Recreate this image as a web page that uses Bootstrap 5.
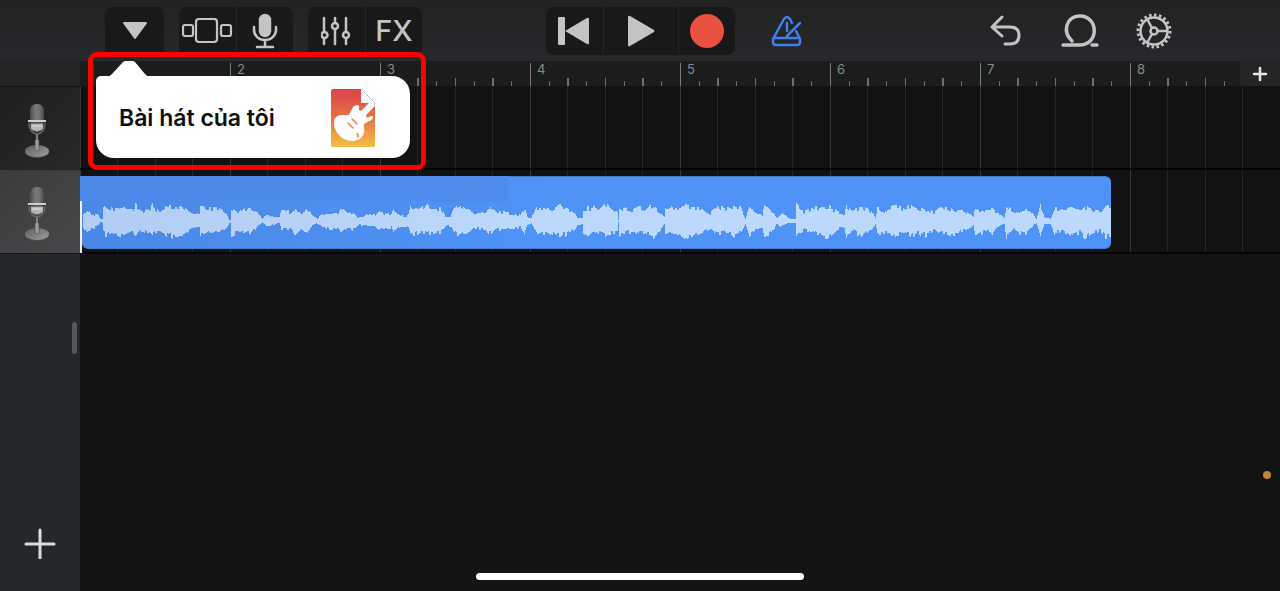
<!DOCTYPE html>
<html lang="vi">
<head>
<meta charset="utf-8">
<meta name="viewport" content="width=device-width, initial-scale=1">
<title>GarageBand</title>
<link href="https://cdn.jsdelivr.net/npm/bootstrap@5.3.0/dist/css/bootstrap.min.css" rel="stylesheet">
<style>
  :root { --bar: 150px; --side: 80px; --ink: #c4c4c6; }
  body { background: #121413; color: var(--ink); font-family: Inter, "Liberation Sans", sans-serif; }
  button { color: inherit; }
  .toolbar { display: grid; grid-template-columns: 1fr auto 1fr; height: 61px; padding-top: 7px; background: linear-gradient(#222223, #27282b); }
  .tool-set { height: 48px; border-radius: 7px; background: #19191a; overflow: hidden; }
  .tool { width: 57px; height: 48px; padding: 0; border: 0; background: none; display: flex; align-items: center; justify-content: center; }
  .tool + .tool { border-left: 1px solid #252627; }
  .tool.wide { width: 75px; }
  .tool.menu { width: 59px; }
  .bare { width: 48px; height: 48px; padding: 0; border: 0; background: none; display: flex; align-items: center; justify-content: center; }
  .left-tools { padding-left: 105px; gap: 15px; }
  .right-tools { padding-left: 28px; padding-right: 102px; }
  .right-set { gap: 26px; }
  .fx { font-size: 29px; font-weight: 500; line-height: 48px; }
  .side { width: var(--side); background: #25282a; }
  .side-head { height: 25px; background: #232425; }
  .track-btn { height: 84px; padding: 4px 6px 0 0; border: 0; border-top: 1px solid #131415; background: linear-gradient(135deg, #1e1f1f, #27292a); }
  .track-btn.active { border-top-color: #3a3b3c; background: linear-gradient(135deg, #3a3b3c, #48484a); border-bottom: 1px solid #151616; }
  .grip { width: 5px; height: 32px; border-radius: 3px; background: #56575a; margin: 68px 3px 0 auto; }
  .ruler { height: 25px; background: #1b1d1d; overflow: hidden; }
  .bar-cell { flex: 0 0 var(--bar); height: 25px; padding-left: 7px; font-size: 13px; line-height: 17px; color: #8b8c8c;
    background:
      linear-gradient(#7c7d7d, #7c7d7d) 0 2px / 1px 23px no-repeat,
      linear-gradient(90deg, transparent 37px, #6d6e6e 37px 39px, transparent 39px 75px, #6d6e6e 75px 76px, transparent 76px 112px, #6d6e6e 112px 114px, transparent 114px) 0 17px / 150px 8px no-repeat,
      linear-gradient(90deg, transparent 19px, #6d6e6e 19px 20px, transparent 20px 56px, #6d6e6e 56px 57px, transparent 57px 94px, #6d6e6e 94px 95px, transparent 95px 131px, #6d6e6e 131px 132px, transparent 132px) 0 20px / 150px 5px no-repeat; }
  .bar-cell:first-child { background: none; }
  .add-bar { width: 40px; height: 25px; border: 0; padding: 0; background: #232526; right: 0; top: 0; }
  .lane { height: 84px; border-bottom: 2px solid #050606;
    background:
      linear-gradient(90deg, #383a39 1px, transparent 1px) 0 0 / 150px 100%,
      linear-gradient(90deg, transparent 37px, #252726 37px 38px, transparent 38px 75px, #252726 75px 76px, transparent 76px 112px, #252726 112px 113px, transparent 113px) 0 0 / 150px 100%,
      #111312; }
  .region { width: 1029px; height: 73px; margin: 6px 0 0 2px; border-radius: 6px; background: linear-gradient(90deg, #4a88e6, #4f93f7 45%); border-top: 1px solid #4179cc; border-bottom: 1px solid #3f7bd6; }
  .region-cap { width: 428px; height: 25px; left: 0; top: 6px; background: linear-gradient(90deg, #4c89e9, #4d8cec); }
  .playhead { width: 2px; height: 52px; left: 0; top: 31px; background: #eee; }
  .hint { left: 88px; top: 52px; width: 338px; height: 118px; padding: 19px 11px 6px 3px; border: 5px solid #f00; border-radius: 9px; }
  .bubble { width: 100%; height: 82px; padding: 1px 35px 0 23px; border: 0; border-radius: 5px 18px 18px 18px; background: #fff; color: #0c0c0d; font-size: 23px; font-weight: 600; }
  .bubble span { padding-top: 2px; }
  .arrow { left: 14px; top: 4px; }
  .home-bar { left: 50%; bottom: 11px; width: 328px; height: 7px; margin-left: -164px; border-radius: 4px; background: #fff; }
  .mic-dot { right: 9px; bottom: 112px; width: 8px; height: 8px; border-radius: 50%; background: #c6823a; }
</style>
</head>
<body class="vh-100 d-flex flex-column overflow-hidden position-relative">

<svg width="0" height="0" class="position-absolute" aria-hidden="true">
  <defs>
    <linearGradient id="head"><stop offset="0" stop-color="#4a4a4a"/><stop offset=".5" stop-color="#858585"/><stop offset="1" stop-color="#474747"/></linearGradient>
    <linearGradient id="base" x2="1" y2="1"><stop offset="0" stop-color="#5c5c5c"/><stop offset="1" stop-color="#a0a0a0"/></linearGradient>
    <linearGradient id="doc" x2="0" y2="1"><stop offset="0" stop-color="#dd414c"/><stop offset=".5" stop-color="#e57542"/><stop offset="1" stop-color="#f3bf45"/></linearGradient>
    <symbol id="studio-mic" viewBox="0 0 26 56">
      <ellipse cx="13" cy="49" rx="12" ry="6" fill="#4e4e4e"/>
      <ellipse cx="13" cy="48" rx="12" ry="6" fill="url(#base)"/>
      <path d="M12 30h2v7h1v10q-2 2-4 0V37h1z" fill="#999" stroke="#444" stroke-width=".5"/>
      <path d="M5 20q0 10 8 11 8-1 8-11" fill="none" stroke="#666" stroke-width="1.500"/>
      <path d="M6 27V8q0-7 7-7t7 7v19l-7 2z" fill="url(#head)"/>
      <path d="M9 4v12M13 2v14M17 4v12" stroke="#666"/>
      <path d="M7 20h12v6q-6 4-12 0z" fill="#b5b5b5"/>
      <path d="M4 17h18v2H4z" fill="#d0d0d0"/><path d="M5 20h16" stroke="#333"/><path d="M8 23h10" stroke="#e2e2e2"/>
    </symbol>
  </defs>
</svg>

<header class="toolbar">
  <div class="left-tools d-flex">
    <div class="tool-set"><button class="tool menu" aria-label="Menu"><svg width="26" height="18" viewBox="0 0 26 18"><path d="M2 1h22L13 16z" fill="currentColor" stroke="currentColor" stroke-width="2" stroke-linejoin="round"/></svg></button></div>
    <div class="tool-set d-flex">
      <button class="tool" aria-label="Tracks"><svg width="52" height="26" viewBox="0 0 52 26" fill="none" stroke="currentColor" stroke-width="2.200"><rect x="1" y="7" width="10" height="11" rx="2"/><rect x="14" y="1" width="21" height="23" rx="3"/><rect x="39" y="7" width="10" height="11" rx="2"/></svg></button>
      <button class="tool" aria-label="Microphone"><svg width="26" height="36" viewBox="0 0 26 36" fill="none" stroke="currentColor" stroke-width="2.500" stroke-linecap="round"><rect x="8" y="2" width="10" height="21" rx="5" fill="currentColor"/><path d="M2 14v3a11 10 0 0 0 22 0v-3M13 28v6M5 34h16"/></svg></button>
    </div>
    <div class="tool-set d-flex">
      <button class="tool" aria-label="Mixer"><svg width="32" height="30" viewBox="0 0 32 30" fill="none" stroke="currentColor" stroke-width="2.500" stroke-linecap="round"><path d="M3 2v14M3 23v5M14 2v5M14 14v14M25 2v14M25 23v5"/><circle cx="3.500" cy="19" r="3"/><circle cx="14" cy="10" r="3"/><circle cx="25" cy="19" r="3"/></svg></button>
      <button class="tool fx">FX</button>
    </div>
  </div>
  <div class="tool-set d-flex">
    <button class="tool" aria-label="Rewind"><svg width="32" height="30" viewBox="0 0 32 30"><path d="M0 2q0-1 1-1h5q1 0 1 1v26q0 1-1 1H1q-1 0-1-1zM7 15 29 2q2-1 2 1v24q0 2-2 1z" fill="currentColor"/></svg></button>
    <button class="tool wide" aria-label="Play"><svg width="28" height="32" viewBox="0 0 28 32"><path d="M1 2q0-2 2-1l24 14q1 1 0 2L3 31q-2 1-2-1z" fill="currentColor"/></svg></button>
    <button class="tool" aria-label="Record"><svg width="34" height="34" viewBox="0 0 34 34"><circle cx="17" cy="17" r="17" fill="#eb5140"/></svg></button>
  </div>
  <div class="right-tools d-flex">
    <button class="bare me-auto" aria-label="Metronome"><svg width="32" height="32" viewBox="0 0 32 32" fill="none" stroke="#3f7fee" stroke-width="2.500" stroke-linecap="round" stroke-linejoin="round"><path d="m21 8-2-4q-3-4-6 0L2 24v3q0 3 3 3h21q3 0 3-3v-3l-4-8M4 23h23M16 8v8M16 21 29 8"/></svg></button>
    <div class="right-set d-flex">
      <button class="bare" aria-label="Undo"><svg width="32" height="32" viewBox="0 0 32 32" fill="none" stroke="currentColor" stroke-width="3" stroke-linecap="round" stroke-linejoin="round"><path d="M12 2 2 12l10 9M3 12h17q9 0 9 8 0 9-9 9h-5"/></svg></button>
      <button class="bare" aria-label="Loops"><svg width="38" height="34" viewBox="0 0 38 34" fill="none" stroke="currentColor" stroke-width="3.500" stroke-linecap="round"><path d="M2 31h17c20-1 18-29 0-29C5 2 1 18 11 27M31 31h5"/></svg></button>
      <button class="bare" aria-label="Settings"><svg width="36" height="36" viewBox="0 0 36 36" fill="none" stroke="currentColor" stroke-width="2.500"><circle cx="18" cy="18" r="13.500"/><circle cx="18" cy="18" r="16" stroke-width="3" pathLength="80" stroke-dasharray="2 2"/><circle cx="18" cy="18" r="3.500"/><path d="M21 18h11M16 15 11 6M16 21l-5 9"/></svg></button>
    </div>
  </div>
</header>

<main class="d-flex flex-grow-1">
  <aside class="side d-flex flex-column flex-shrink-0">
    <div class="side-head"></div>
    <button class="track-btn" aria-label="Audio track 1"><svg width="26" height="56"><use href="#studio-mic"/></svg></button>
    <button class="track-btn active" aria-label="Audio track 2"><svg width="26" height="56"><use href="#studio-mic"/></svg></button>
    <div class="grip"></div>
    <button class="bare mt-auto mx-auto mb-4" aria-label="Add track"><svg width="32" height="32" viewBox="0 0 32 32" stroke="#dcdcdd" stroke-width="3" stroke-linecap="round"><path d="M2 17h28M16 3v28"/></svg></button>
  </aside>
  <section class="flex-grow-1 position-relative overflow-hidden">
    <div class="ruler d-flex">
      <div class="bar-cell"></div><div class="bar-cell">2</div><div class="bar-cell">3</div><div class="bar-cell">4</div><div class="bar-cell">5</div><div class="bar-cell">6</div><div class="bar-cell">7</div><div class="bar-cell">8</div>
    </div>
    <button class="add-bar position-absolute d-flex align-items-center justify-content-center" aria-label="Add section"><svg width="16" height="16" viewBox="0 0 16 16" stroke="#e6e6e6" stroke-width="2.500" stroke-linecap="round"><path d="M2 8h12M8 2v12"/></svg></button>
    <div class="lane"></div>
    <div class="lane position-relative d-flex">
      <div class="region"><svg class="d-block" id="wave" width="1029" height="71" viewBox="82 177 1029 71" shape-rendering="crispEdges"></svg></div>
      <div class="region-cap position-absolute"></div>
      <div class="playhead position-absolute"></div>
    </div>
  </section>
</main>

<div class="hint position-absolute">
  <svg class="arrow position-absolute" width="42" height="16" viewBox="0 0 42 16"><path d="M0 16q3-1 5-3L16 1q1-1 3-1h6q2 0 3 1l10 12q2 2 4 3z" fill="#fff"/></svg>
  <button class="bubble d-flex align-items-center justify-content-between"><span>Bài hát của tôi</span>
    <svg width="44" height="58" viewBox="0 0 44 58">
      <path d="M2 0h28v14h14v42q0 2-2 2H2q-2 0-2-2V2q0-2 2-2z" fill="url(#doc)"/>
      <path d="M30 0v14h14z" fill="#fff"/><path d="m30 0 13 13" stroke="#c4c4c4"/>
      <path d="M38 14h5l1 3-8 8-1 3q1 1 3 0 3-2 4 0 0 3-4 4l-5 3c-1 3 1 6 0 9-2 6-7 8-12 8C11 52 3 43 3 34c0-5 3-8 8-8 4 0 7 1 8-2 2-3 2-7 7-8 3 0 2 3 2 5l2 1z" fill="#fff"/>
      <path d="m17 34 5 5M21 30l5 5M26 45q2 0 1 3" stroke="#df8845" stroke-width="1.500" stroke-linecap="round" fill="none"/>
    </svg>
  </button>
</div>
<div class="home-bar position-absolute"></div>
<div class="mic-dot position-absolute"></div>

<script>
  // Waveform envelope: x, peak above the axis, peak below the axis.
  const env = "83 8 8,87 12 13,90 8 10,98 6 5,100 2 1,102 2 2,103 14 12,105 17 16,112 13 14,118 14 16,121 16 15,127 11 12,133 12 12,135 17 17,141 10 11,147 11 12,152 17 14,156 12 11,160 10 11,164 14 15,175 15 17,183 14 14,190 8 10,196 9 7,199 8 7,200 17 16,206 13 14,218 14 12,226 7 8,229 1 2,230 1 2,231 15 15,238 10 12,243 12 11,248 15 13,254 12 10,258 7 4,262 2 2,266 7 6,272 5 4,279 4 3,281 11 9,290 10 9,294 13 15,300 8 10,307 13 12,312 6 4,317 2 3,322 8 6,331 8 9,338 8 8,341 14 13,348 9 8,353 8 10,358 3 4,366 7 5,375 7 6,378 12 10,386 7 8,391 7 7,393 13 15,395 10 10,400 6 6,405 5 6,408 7 8,410 16 16,420 13 12,426 17 14,430 14 13,440 13 12,445 5 5,450 5 6,453 12 13,460 17 16,466 12 12,475 9 8,485 9 9,491 16 15,496 10 10,505 9 9,520 6 7,524 15 14,527 4 4,531 3 3,536 14 13,548 12 13,556 15 15,560 17 16,567 13 14,575 8 8,577 3 5,582 3 3,583 13 13,588 14 17,596 14 13,605 17 15,612 12 13,617 11 12,618 1 1,619 15 15,630 11 12,638 16 14,645 12 12,653 17 17,660 9 11,664 4 4,665 14 14,677 13 13,685 16 17,695 13 15,702 14 12,710 8 8,716 17 15,725 14 12,733 15 16,740 14 12,745 3 4,748 15 16,755 9 8,762 7 8,764 17 16,771 10 13,777 3 3,780 6 6,783 9 4,790 2 2,795 2 2,796 17 16,804 10 9,815 14 14,827 16 17,833 12 12,841 8 6,844 8 7,846 17 16,852 11 11,861 15 16,871 10 9,875 3 4,877 14 14,886 10 12,894 16 16,905 12 11,910 17 17,916 12 12,925 13 16,933 9 10,941 14 13,952 12 15,960 11 12,970 7 8,973 4 4,975 15 16,985 10 11,992 13 13,1000 8 6,1004 3 3,1006 16 17,1015 8 9,1023 14 15,1032 8 7,1036 2 2,1040 17 14,1044 5 4,1050 3 3,1054 14 13,1062 12 11,1072 14 17,1080 12 11,1084 16 17,1093 12 12,1100 11 10,1105 16 17,1111 14 16"
    .split(",").map(p => p.split(" ").map(Number));
  let d = "", seed = 7, a = 1, b = 1;
  const jitter = () => { seed = (seed * 16807) % 2147483647; return 1.08 - 0.36 * (seed % 100) / 100; };
  for (let i = 0; i < env.length - 1; i++) {
    const [x0, u0, d0] = env[i], [x1, u1, d1] = env[i + 1];
    for (let x = x0; x < x1; x++) {
      const t = (x - x0) / (x1 - x0);
      if (x % 2) { a = jitter(); b = jitter(); }
      const up = Math.round((u0 + (u1 - u0) * t) * a);
      const dn = Math.round((d0 + (d1 - d0) * t) * b);
      d += `M${x} ${221 - up}h1v${up + dn}h-1z`;
    }
  }
  document.getElementById("wave").innerHTML =
    `<defs><linearGradient id="pale" gradientUnits="userSpaceOnUse" x1="82" x2="540" y1="0" y2="0"><stop stop-color="#b2cdf3"/><stop offset="1" stop-color="#bdd8fd"/></linearGradient></defs><path d="${d}" fill="url(#pale)"/>`;
</script>
<script src="https://cdn.jsdelivr.net/npm/bootstrap@5.3.0/dist/js/bootstrap.bundle.min.js"></script>
</body>
</html>
